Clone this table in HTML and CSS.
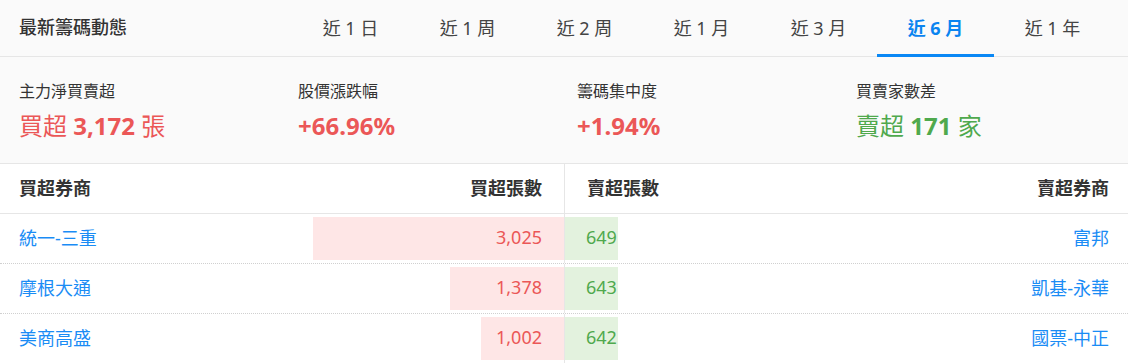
FILE: index.html
```html
<!DOCTYPE html>
<html lang="zh-Hant">
<head>
<meta charset="utf-8">
<title>最新籌碼動態</title>
<link rel="stylesheet" href="styles.css">
</head>
<body>
<div class="panel">
  <header class="head">
    <h2 class="title">最新籌碼動態</h2>
    <nav class="tabs">
      <a class="tab">近 1 日</a>
      <a class="tab">近 1 周</a>
      <a class="tab">近 2 周</a>
      <a class="tab">近 1 月</a>
      <a class="tab">近 3 月</a>
      <a class="tab active">近 6 月</a>
      <a class="tab">近 1 年</a>
    </nav>
  </header>
  <section class="stats">
    <div class="stat">
      <div class="label">主力淨買賣超</div>
      <div class="value up">買超 <b>3,172</b> 張</div>
    </div>
    <div class="stat">
      <div class="label">股價漲跌幅</div>
      <div class="value up"><b>+66.96%</b></div>
    </div>
    <div class="stat">
      <div class="label">籌碼集中度</div>
      <div class="value up"><b>+1.94%</b></div>
    </div>
    <div class="stat">
      <div class="label">買賣家數差</div>
      <div class="value down">賣超 <b>171</b> 家</div>
    </div>
  </section>
  <div class="table">
    <div class="row thead">
      <div class="half buy">
        <span class="name">買超券商</span>
        <span class="num">買超張數</span>
      </div>
      <div class="half sell">
        <span class="num">賣超張數</span>
        <span class="name">賣超券商</span>
      </div>
    </div>
    <div class="row">
      <div class="half buy">
        <a class="name">統一-三重</a>
        <span class="bar" style="width:251px">3,025</span>
      </div>
      <div class="half sell">
        <span class="bar" style="width:53px">649</span>
        <a class="name">富邦</a>
      </div>
    </div>
    <div class="row">
      <div class="half buy">
        <a class="name">摩根大通</a>
        <span class="bar" style="width:114px">1,378</span>
      </div>
      <div class="half sell">
        <span class="bar" style="width:53px">643</span>
        <a class="name">凱基-永華</a>
      </div>
    </div>
    <div class="row">
      <div class="half buy">
        <a class="name">美商高盛</a>
        <span class="bar" style="width:83px">1,002</span>
      </div>
      <div class="half sell">
        <span class="bar" style="width:53px">642</span>
        <a class="name">國票-中正</a>
      </div>
    </div>
  </div>
</div>
</body>
</html>
```
FILE: styles.css
```css
* { box-sizing: border-box; }
html, body { margin: 0; padding: 0; background: #fff; }
body {
  font-family: "Noto Sans", "Noto Sans CJK TC", sans-serif;
  color: #333;
  width: 1128px;
}
.panel { width: 1128px; }

.head {
  display: flex;
  align-items: stretch;
  height: 57px;
  background: #fafafa;
  border-bottom: 1px solid #e6e6e6;
}
.title {
  flex: 1;
  margin: 0;
  padding: 0 0 4px 19px;
  display: flex;
  align-items: center;
  font-size: 18px;
  font-weight: 500;
  color: #333;
}
.tabs {
  display: flex;
  padding-right: 17px;
  margin-bottom: -1px;
}
.tab {
  width: 117px;
  display: flex;
  align-items: center;
  justify-content: center;
  font-size: 18px;
  color: #444;
  border-bottom: 3px solid transparent;
  padding-bottom: 1px;
}
.tab.active {
  color: #0a84f0;
  font-weight: 700;
  border-bottom-color: #0a88f5;
}

.stats {
  display: grid;
  grid-template-columns: repeat(4, 279px);
  padding: 22px 0 19px 19px;
  background: #fafafa;
  border-bottom: 1px solid #e6e6e6;
}
.label {
  font-size: 16px;
  line-height: 24px;
  color: #333;
}
.value {
  margin-top: 5px;
  font-size: 24px;
  line-height: 36px;
}
.value b { font-weight: 700; }
.up { color: #eb5757; }
.down { color: #4fa94d; }

.row {
  display: grid;
  grid-template-columns: 564px 564px;
  height: 50px;
  border-bottom: 1px dotted #d0d0d0;
}
.row.thead {
  height: 50px;
  border-bottom: 1px solid #e6e6e6;
}
.half {
  display: flex;
  justify-content: space-between;
  align-items: stretch;
  padding: 3px 0;
}
.half.sell { border-left: 1px solid #e6e6e6; }
.thead .half { padding: 0; }
.name, .num {
  display: flex;
  align-items: center;
  font-size: 18px;
  padding-bottom: 4px;
}
.buy .name { padding-left: 19px; }
.sell .name { padding-right: 19px; }
.buy .num { padding-right: 22px; }
.sell .num { padding-left: 22px; }
.thead .name, .thead .num {
  font-weight: 700;
  color: #333;
}
a.name { color: #1a8cf5; text-decoration: none; }

.bar {
  display: flex;
  align-items: center;
  font-size: 18px;
  white-space: nowrap;
  padding-bottom: 4px;
}
.buy .bar {
  justify-content: flex-end;
  padding-right: 22px;
  background: #fee6e6;
  color: #eb5757;
}
.sell .bar {
  padding-left: 21px;
  background: #e3f2de;
  color: #4fa94d;
}
```
